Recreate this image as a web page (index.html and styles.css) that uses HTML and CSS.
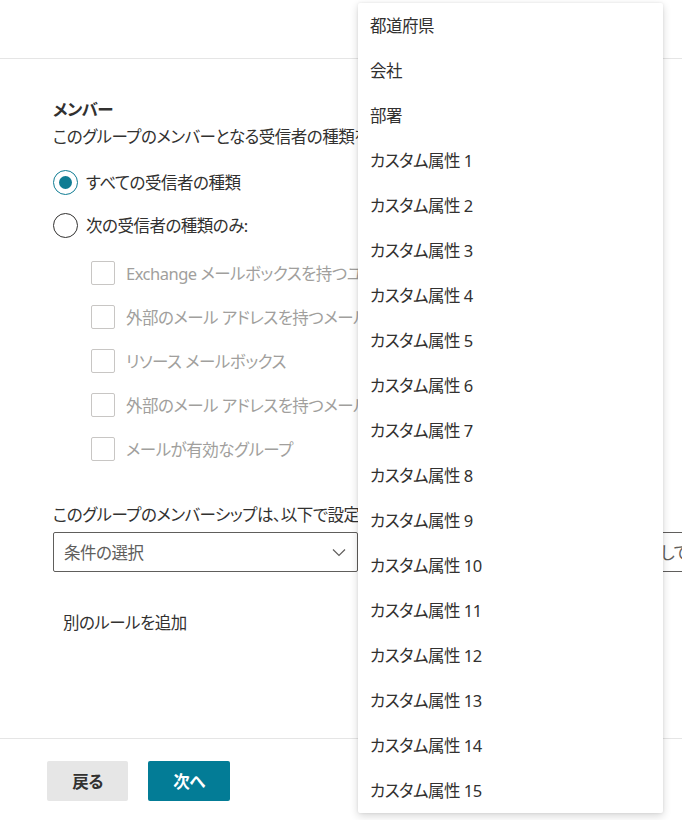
FILE: index.html
```html
<!DOCTYPE html>
<html lang="ja">
<head>
<meta charset="utf-8">
<title>メンバー</title>
<link rel="stylesheet" href="styles.css">
</head>
<body>
<div class="page">
  <header class="topbar"></header>

  <main class="content">
    <h2 class="section-title">メンバー</h2>
    <p class="section-desc">このグループのメンバーとなる受信者の種類を指定します。</p>

    <div class="radio-group">
      <label class="radio-row">
        <span class="radio is-checked"></span>
        <span class="radio-label">すべての受信者の種類</span>
      </label>
      <label class="radio-row">
        <span class="radio"></span>
        <span class="radio-label">次の受信者の種類のみ:</span>
      </label>
    </div>

    <ul class="check-list">
      <li class="check-row"><span class="checkbox"></span><span class="check-label">Exchange メールボックスを持つユーザー</span></li>
      <li class="check-row"><span class="checkbox"></span><span class="check-label">外部のメール アドレスを持つメール ユーザー</span></li>
      <li class="check-row"><span class="checkbox"></span><span class="check-label">リソース メールボックス</span></li>
      <li class="check-row"><span class="checkbox"></span><span class="check-label">外部のメール アドレスを持つメール連絡先</span></li>
      <li class="check-row"><span class="checkbox"></span><span class="check-label">メールが有効なグループ</span></li>
    </ul>

    <p class="rule-label">このグループのメンバーシップは、以下で設定した条件に基づきます。</p>

    <div class="rule-row">
      <div class="select-box">
        <span class="select-placeholder">条件の選択</span>
        <svg class="chevron" width="16" height="16" viewBox="0 0 16 16" aria-hidden="true">
          <path d="M2 5.5 L8 11.5 L14 5.5" fill="none" stroke="#605e5c" stroke-width="1.2"/>
        </svg>
      </div>
      <div class="value-box">
        <span class="value-text">値を入力して</span>
      </div>
    </div>

    <div class="add-rule">別のルールを追加</div>
  </main>

  <footer class="footer">
    <button class="btn btn-secondary" type="button">戻る</button>
    <button class="btn btn-primary" type="button">次へ</button>
  </footer>

  <ul class="menu" role="listbox">
    <li class="menu-item">都道府県</li>
    <li class="menu-item">会社</li>
    <li class="menu-item">部署</li>
    <li class="menu-item">カスタム属性 1</li>
    <li class="menu-item">カスタム属性 2</li>
    <li class="menu-item">カスタム属性 3</li>
    <li class="menu-item">カスタム属性 4</li>
    <li class="menu-item">カスタム属性 5</li>
    <li class="menu-item">カスタム属性 6</li>
    <li class="menu-item">カスタム属性 7</li>
    <li class="menu-item">カスタム属性 8</li>
    <li class="menu-item">カスタム属性 9</li>
    <li class="menu-item">カスタム属性 10</li>
    <li class="menu-item">カスタム属性 11</li>
    <li class="menu-item">カスタム属性 12</li>
    <li class="menu-item">カスタム属性 13</li>
    <li class="menu-item">カスタム属性 14</li>
    <li class="menu-item">カスタム属性 15</li>
  </ul>
</div>
</body>
</html>
```

FILE: styles.css
```css
* {
  box-sizing: border-box;
}

html, body {
  margin: 0;
  padding: 0;
  background: #ffffff;
}

body {
  font-family: "Noto Sans", "Noto Sans CJK JP", sans-serif;
  font-feature-settings: "palt";
  font-size: 16.5px;
  letter-spacing: -0.5px;
  color: #323130;
  overflow: hidden;
}

.page {
  position: relative;
  display: flex;
  flex-direction: column;
  height: 100vh;
}

.topbar {
  height: 59px;
  border-bottom: 1px solid #e5e5e5;
  flex: none;
}

.content {
  flex: 1;
  padding: 37px 0 0 53px;
  white-space: nowrap;
  overflow: hidden;
}

.section-title {
  margin: 0;
  font-size: 16.5px;
  font-weight: 700;
  line-height: 27px;
}

.section-desc {
  margin: 0;
  line-height: 27px;
}

/* radio buttons */
.radio-group {
  margin-top: 11px;
  display: flex;
  flex-direction: column;
}

.radio-row {
  display: flex;
  align-items: center;
  gap: 8px;
  height: 43px;
}

.radio {
  width: 25px;
  height: 25px;
  border: 1.5px solid #323130;
  border-radius: 50%;
  display: flex;
  align-items: center;
  justify-content: center;
  flex: none;
}

.radio.is-checked {
  border-color: #0f7c93;
}

.radio.is-checked::after {
  content: "";
  width: 13px;
  height: 13px;
  border-radius: 50%;
  background: #0f7c93;
}

.radio-label {
  line-height: 27px;
}

/* checkboxes (disabled) */
.check-list {
  list-style: none;
  margin: 4px 0 0;
  padding: 0 0 0 38px;
}

.check-row {
  display: flex;
  align-items: center;
  gap: 11px;
  height: 44px;
}

.checkbox {
  width: 24px;
  height: 24px;
  border: 1px solid #c8c6c4;
  border-radius: 2px;
  flex: none;
}

.check-label {
  color: #a19f9d;
  line-height: 27px;
}

.rule-label {
  margin: 30px 0 0;
  line-height: 27px;
}

/* condition row */
.rule-row {
  display: flex;
  gap: 8px;
  margin-top: 4px;
}

.select-box {
  width: 305px;
  height: 40px;
  border: 1px solid #605e5c;
  border-radius: 2px;
  display: flex;
  align-items: center;
  justify-content: space-between;
  padding: 0 10px 0 10px;
  flex: none;
}

.select-placeholder {
  color: #605e5c;
}

.chevron {
  display: block;
}

.value-box {
  flex: 1;
  height: 40px;
  border: 1px solid #605e5c;
  border-right: none;
  display: flex;
  align-items: center;
  overflow: hidden;
  padding-left: 231px;
}

.value-text {
  color: #605e5c;
}

.add-rule {
  margin-top: 37px;
  padding-left: 10px;
  line-height: 27px;
}

/* footer */
.footer {
  flex: none;
  height: 82px;
  border-top: 1px solid #e5e5e5;
  padding: 22px 0 0 47px;
  display: flex;
  align-items: flex-start;
  gap: 20px;
}

.btn {
  height: 40px;
  min-width: 81px;
  padding: 0 20px;
  border: none;
  border-radius: 2px;
  font-family: inherit;
  font-feature-settings: "palt";
  font-size: 16.5px;
  letter-spacing: -0.5px;
  font-weight: 700;
}

.btn-secondary {
  background: #e6e6e6;
  color: #323130;
}

.btn-primary {
  background: #037c96;
  color: #ffffff;
  min-width: 82px;
}

/* dropdown menu overlay */
.menu {
  position: absolute;
  left: 358px;
  top: 3px;
  width: 305px;
  margin: 0;
  padding: 0;
  list-style: none;
  background: #ffffff;
  border-radius: 2px;
  box-shadow: 0 3px 8px rgba(0, 0, 0, 0.16), 0 0 3px rgba(0, 0, 0, 0.08);
}

.menu-item {
  height: 45px;
  line-height: 45px;
  padding-left: 12px;
  color: #323130;
  white-space: nowrap;
}
```
